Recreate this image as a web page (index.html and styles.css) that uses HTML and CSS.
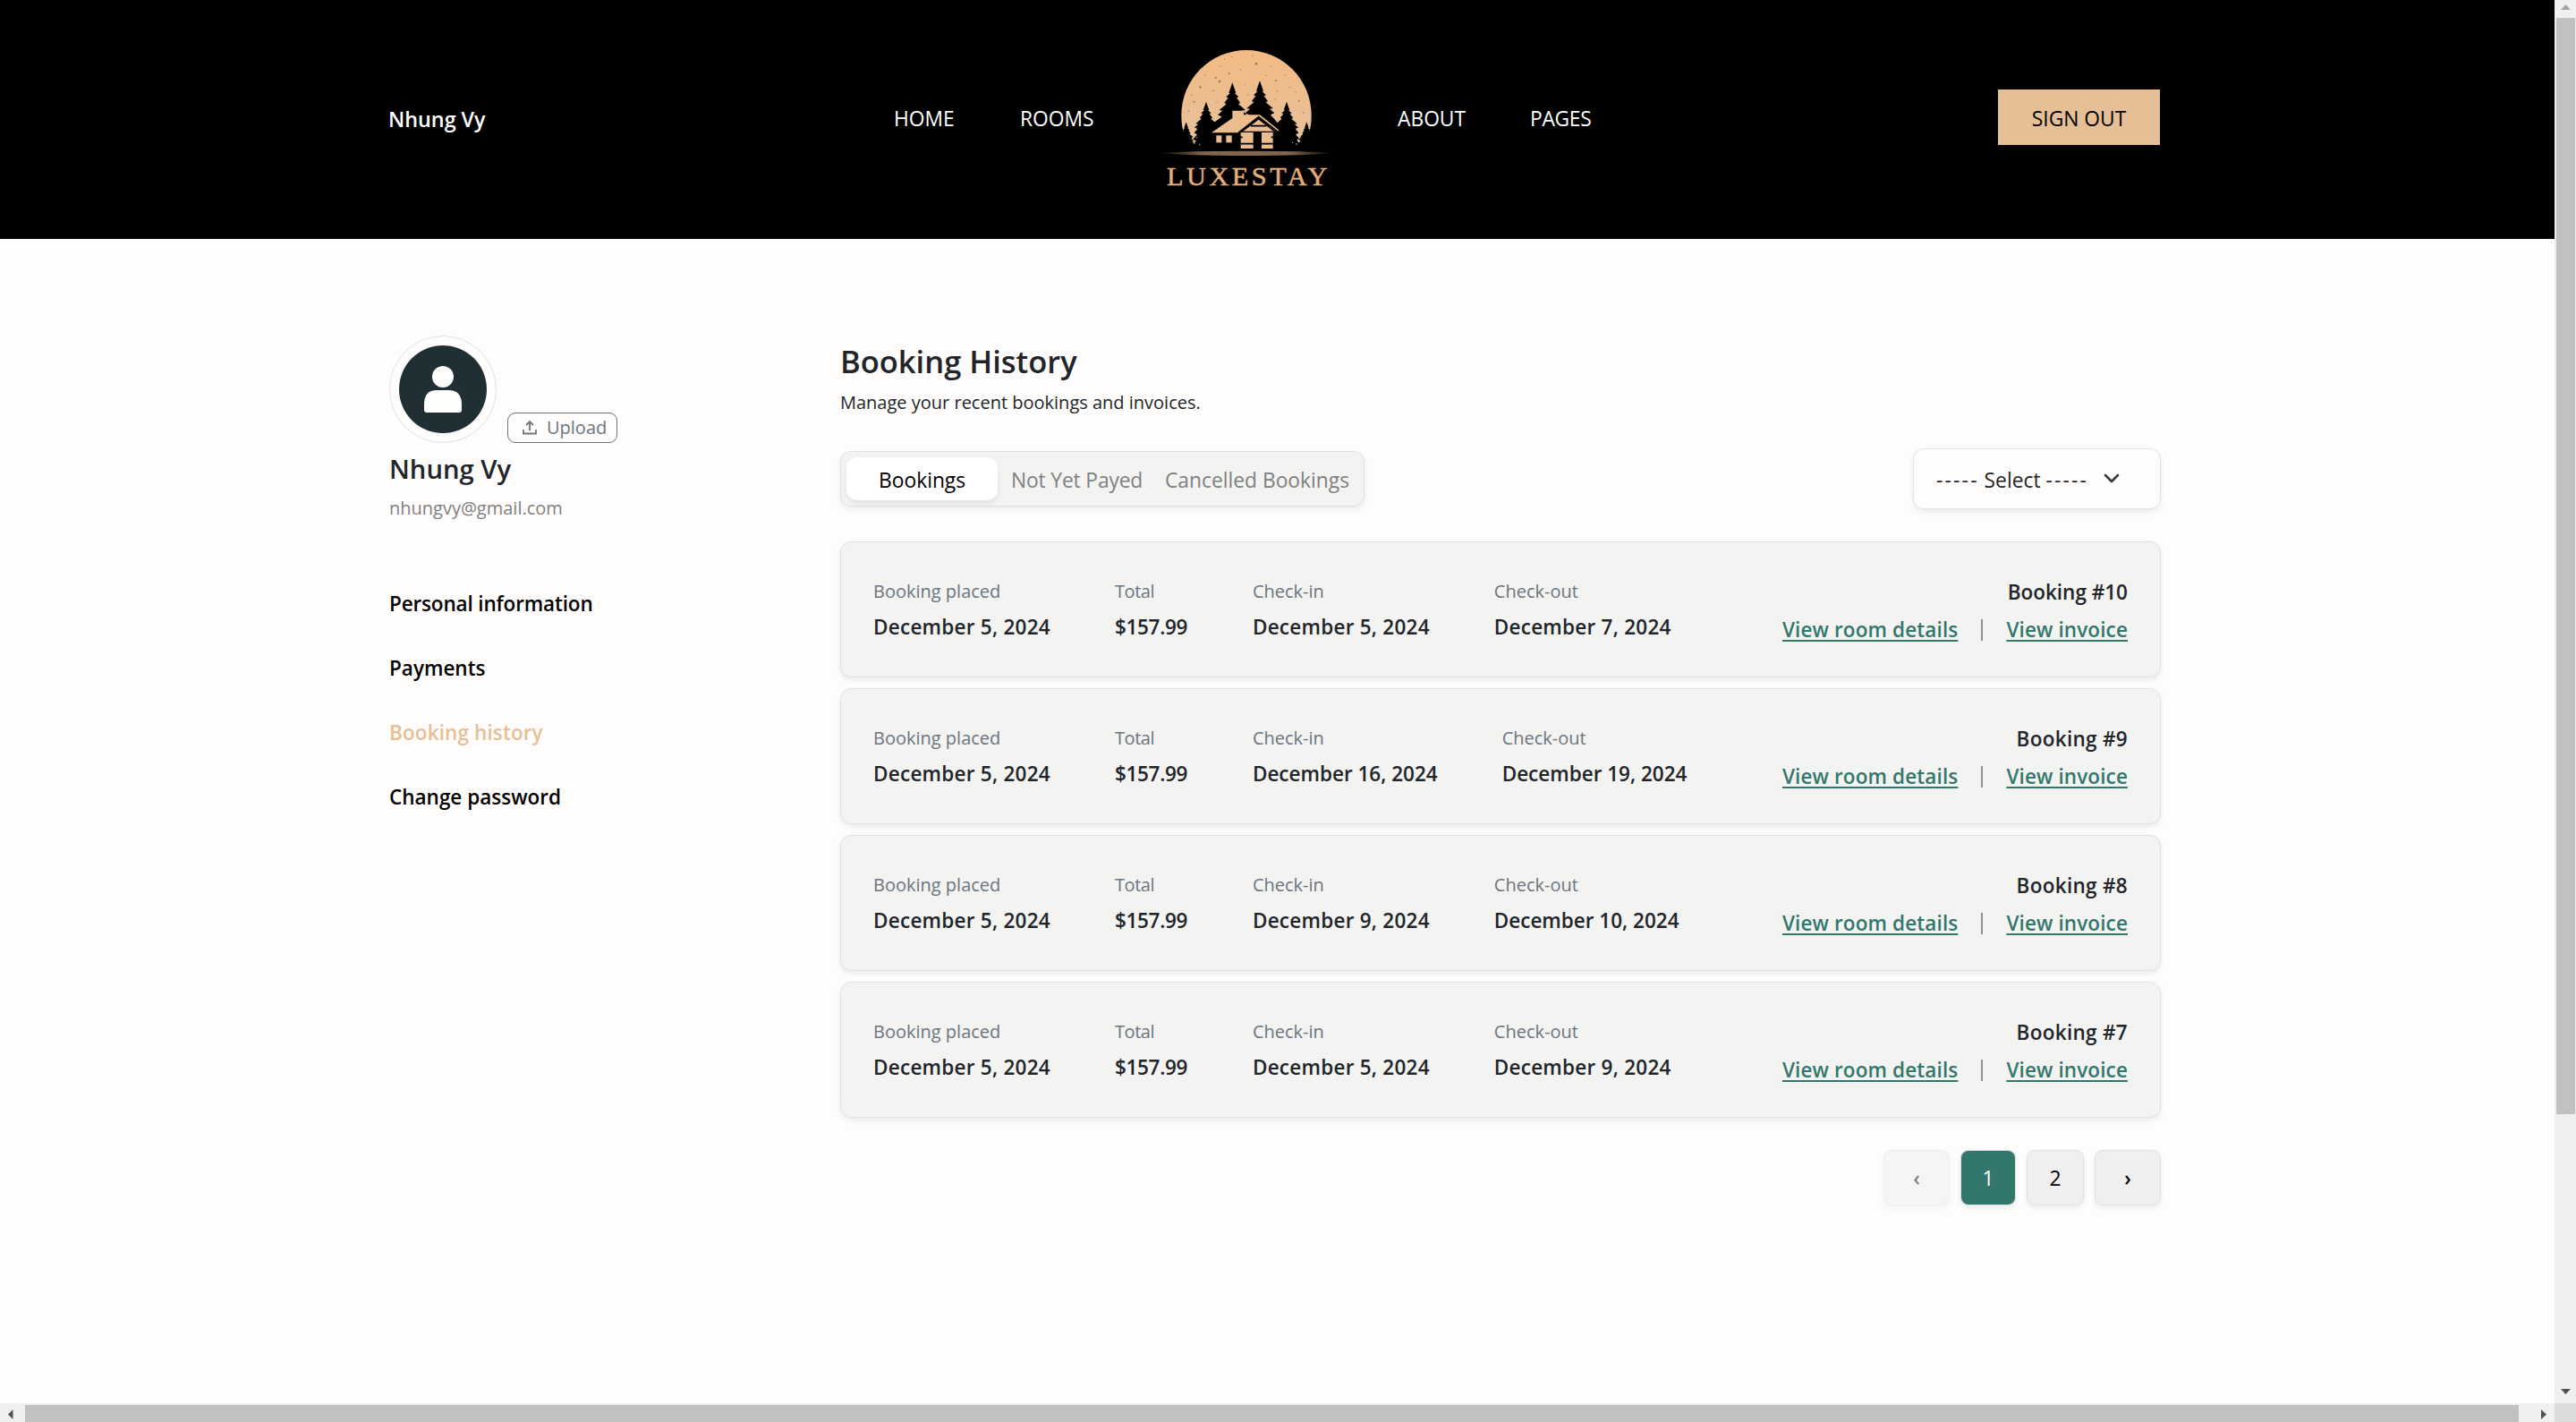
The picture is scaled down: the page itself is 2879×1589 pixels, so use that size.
FILE: index.html
```html
<!DOCTYPE html>
<html lang="en">
<head>
<meta charset="utf-8">
<title>Booking History</title>
<link rel="stylesheet" href="styles.css">
</head>
<body>
<div class="viewport">
<div class="page">
  <header class="header">
    <div class="brand-user"><span>Nhung Vy</span></div>
    <nav class="nav">
      <a class="home">HOME</a>
      <a class="rooms">ROOMS</a>
      <svg class="logo" viewBox="0 0 690 600">
        <defs>
          <linearGradient id="sun" x1="0" y1="0" x2="0" y2="1"><stop offset="0" stop-color="#f3bb84"/><stop offset="1" stop-color="#e5c19c"/></linearGradient>
          <linearGradient id="ground"><stop offset="0" stop-color="#80664f" stop-opacity="0"/><stop offset=".25" stop-color="#80664f"/><stop offset=".75" stop-color="#80664f"/><stop offset="1" stop-color="#80664f" stop-opacity="0"/></linearGradient>
          <path id="tree" d="M0 0L5 14L12 34L8 36L21 48L14 51L27 68L20 72L44 92L33 94L49 108L36 114L50 130L38 138L54 156L40 166L58 190L52 230H-52L-58 190L-40 166L-54 156L-38 138L-50 130L-36 114L-49 108L-33 94L-44 92L-20 72L-27 68L-14 51L-21 48L-8 36L-12 34L-5 14Z"/>
        </defs>
        <path d="M121 293A218 218 0 0 1 557 293Q557 325 551 345L500 405H178L127 345Q121 325 121 293Z" fill="url(#sun)"/>
        <g fill="#4a392b" opacity=".55">
          <circle cx="372" cy="121" r="4"/><circle cx="281" cy="154" r="3"/><circle cx="236" cy="168" r="3"/><circle cx="249" cy="180" r="4"/><circle cx="184" cy="199" r="3.5"/><circle cx="438" cy="177" r="3"/><circle cx="360" cy="95" r="2"/><circle cx="290" cy="97" r="2"/><circle cx="164" cy="248" r="3"/><circle cx="228" cy="211" r="2.5"/><circle cx="145" cy="279" r="2.5"/><circle cx="505" cy="215" r="2"/><circle cx="442" cy="213" r="2"/><circle cx="252" cy="130" r="2"/><circle cx="320" cy="140" r="2"/><circle cx="420" cy="130" r="2"/><circle cx="467" cy="160" r="2"/><circle cx="484" cy="200" r="2"/><circle cx="515" cy="245" r="2.5"/><circle cx="530" cy="285" r="2"/><circle cx="200" cy="160" r="2"/><circle cx="335" cy="190" r="2"/><circle cx="155" cy="225" r="2"/><circle cx="240" cy="250" r="2"/><circle cx="405" cy="160" r="2"/><circle cx="265" cy="105" r="2"/><circle cx="345" cy="225" r="2"/><circle cx="435" cy="240" r="2"/>
        </g>
        <g fill="#000">
          <use href="#tree" x="292" y="184"/><use href="#tree" x="384" y="178"/>
          <use href="#tree" transform="translate(204 248) scale(.8)"/><use href="#tree" transform="translate(474 248) scale(.8)"/>
          <use href="#tree" transform="translate(137 316) scale(.55)"/><use href="#tree" transform="translate(541 316) scale(.55)"/>
          <path d="M215 330L250 303H430L470 350V410H150L160 385L172 380L180 360ZM455 340L500 370L515 385L530 410H455Z"/>
        </g>
        <g fill="#e0bd98"><circle cx="158" cy="372" r="3"/><circle cx="164" cy="386" r="3"/><circle cx="154" cy="358" r="2.5"/><circle cx="172" cy="368" r="2"/><circle cx="512" cy="376" r="3"/><circle cx="520" cy="362" r="3"/><circle cx="507" cy="390" r="2.5"/><circle cx="182" cy="392" r="2"/><circle cx="494" cy="385" r="2"/></g>
        <g fill="#ebbd8e">
          <path d="M222 352L292 303V278H330V292H384L446 341L448 349L436 345L380 301L312 352Z"/>
          <path d="M328 347L380 308L430 347Z"/>
          <rect x="238" y="361" width="18" height="24"/><rect x="271" y="361" width="19" height="24"/>
          <rect x="320" y="351" width="42" height="54"/><rect x="390" y="351" width="38" height="54"/>
        </g>
        <path d="M312 352L380 299L446 350M354 329H406M320 389H428M318 367H326M422 367H430" fill="none" stroke="#000" stroke-width="5"/>
        <path d="M45 420Q130 413 338 413Q546 413 632 420Q540 429 338 429Q140 429 45 420Z" fill="url(#ground)"/>
        <text x="72" y="527" textLength="538" lengthAdjust="spacing" class="logo-text">LUXESTAY</text>
      </svg>
      <a class="about">ABOUT</a>
      <a class="pages">PAGES</a>
    </nav>
    <button class="signout"><span>SIGN OUT</span></button>
  </header>

  <main class="main">
    <aside class="side">
      <div class="avatar-row">
        <div class="avatar">
          <svg viewBox="0 0 98 98"><circle cx="49" cy="49" r="49" fill="#1f2f33"/><circle cx="49" cy="35" r="12" fill="#fff"/><path d="M28 72V66Q28 50 42 50H56Q70 50 70 66V72Q70 75 67 75H31Q28 75 28 72Z" fill="#fff"/></svg>
        </div>
        <button class="upload">
          <svg viewBox="0 0 16 16"><path d="M8 11V1.5M4 5L8 1L12 5M1 10V14.5H15V10" fill="none" stroke="#6c757d" stroke-width="1.8"/></svg>
          <span>Upload</span>
        </button>
      </div>
      <div class="name"><span>Nhung Vy</span></div>
      <div class="email"><span>nhungvy@gmail.com</span></div>
      <nav class="menu">
        <a class="personal">Personal information</a>
        <a>Payments</a>
        <a class="current">Booking history</a>
        <a>Change password</a>
      </nav>
    </aside>

    <section class="content">
      <h1>Booking History</h1>
      <p class="sub">Manage your recent bookings and invoices.</p>
      <div class="toolbar">
        <div class="tabs">
          <a class="tab active">Bookings</a>
          <a class="tab t2">Not Yet Payed</a>
          <a class="tab">Cancelled Bookings</a>
        </div>
        <div class="select">
          <span><span class="dash">-----</span> Select <span class="dash">-----</span></span>
          <svg viewBox="0 0 18 12"><path d="M2 2L9 9L16 2" fill="none" stroke="#343a40" stroke-width="2.6" stroke-linecap="round" stroke-linejoin="round"/></svg>
        </div>
      </div>
      <div class="cards">
        <article class="card">
          <dl><dt>Booking placed</dt><dd>December 5, 2024</dd></dl>
          <dl class="total"><dt>Total</dt><dd>$157.99</dd></dl>
          <dl><dt>Check-in</dt><dd>December 5, 2024</dd></dl>
          <dl><dt>Check-out</dt><dd>December 7, 2024</dd></dl>
          <div class="actions"><b>Booking #10</b><div class="links"><a>View room details</a><i></i><a>View invoice</a></div></div>
        </article>
        <article class="card">
          <dl><dt>Booking placed</dt><dd>December 5, 2024</dd></dl>
          <dl class="total"><dt>Total</dt><dd>$157.99</dd></dl>
          <dl class="long"><dt>Check-in</dt><dd>December 16, 2024</dd></dl>
          <dl class="long"><dt>Check-out</dt><dd>December 19, 2024</dd></dl>
          <div class="actions short"><b>Booking #9</b><div class="links"><a>View room details</a><i></i><a>View invoice</a></div></div>
        </article>
        <article class="card">
          <dl><dt>Booking placed</dt><dd>December 5, 2024</dd></dl>
          <dl class="total"><dt>Total</dt><dd>$157.99</dd></dl>
          <dl><dt>Check-in</dt><dd>December 9, 2024</dd></dl>
          <dl class="long"><dt>Check-out</dt><dd>December 10, 2024</dd></dl>
          <div class="actions short"><b>Booking #8</b><div class="links"><a>View room details</a><i></i><a>View invoice</a></div></div>
        </article>
        <article class="card">
          <dl><dt>Booking placed</dt><dd>December 5, 2024</dd></dl>
          <dl class="total"><dt>Total</dt><dd>$157.99</dd></dl>
          <dl><dt>Check-in</dt><dd>December 5, 2024</dd></dl>
          <dl><dt>Check-out</dt><dd>December 9, 2024</dd></dl>
          <div class="actions short"><b>Booking #7</b><div class="links"><a>View room details</a><i></i><a>View invoice</a></div></div>
        </article>
      </div>
      <div class="pager">
        <button class="pg arrow" disabled>‹</button>
        <button class="pg on">1</button>
        <button class="pg num">2</button>
        <button class="pg arrow">›</button>
      </div>
    </section>
  </main>
</div>
<div class="vbar"><svg viewBox="0 0 24 20"><path d="M7 11L12.5 5L18 11Z" fill="#a3a3a3"/></svg><div class="vthumb"></div><svg class="down" viewBox="0 0 24 20"><path d="M7 4L12.5 10L18 4Z" fill="#505050"/></svg></div>
<div class="hbar"><svg viewBox="0 0 28 21"><path d="M14.500 7L9 12.500L14.500 18Z" fill="#505050"/></svg><div class="hthumb"></div><svg class="right" viewBox="0 0 40 21"><path d="M25 7L31 12.500L25 18Z" fill="#505050"/></svg></div>
<div class="corner"></div>
</div>
</body>
</html>
```
FILE: styles.css
```css
* { box-sizing: border-box; margin: 0; padding: 0; }
html, body { width: 2879px; height: 1589px; overflow: hidden; }
body { font-family: "Open Sans", "Noto Sans", sans-serif; font-size: 22.8px; line-height: 36px; color: #212529; background: #fffdfc; }
button { font: inherit; border: 0; }
.viewport { display: grid; grid-template-columns: 2855px 24px; grid-template-rows: 1568px 21px; height: 1589px; }
.page { overflow: hidden; }

.header { display: flex; align-items: center; height: 267px; padding: 0 441px 5px 434px; background: #000; color: #fff; }
.brand-user { width: 565px; font-size: 23.300px; font-weight: 600; padding-top: 4px; }
.nav { display: flex; align-items: center; }
.nav a { padding-top: 4px; white-space: nowrap; }
.home { width: 141px; }
.rooms { width: 140px; }
.about { width: 148px; margin-left: 52px; }
.pages { letter-spacing: -.3px; }
.logo { display: block; width: 230px; height: 200px; }
.logo-text { font-family: "Liberation Serif", serif; font-size: 91px; fill: #e3ae7b; stroke: #e3ae7b; stroke-width: 1.5px; }
.signout { width: 181px; height: 62px; margin-left: auto; padding-top: 3px; background: #e6bf96; color: #000; }

.main { display: flex; padding: 108px 440px 0 435px; }
.side { width: 504px; }
.avatar-row { display: flex; align-items: flex-end; gap: 12px; }
.avatar { width: 120px; height: 120px; padding: 10px; border: 1px solid #dee2e6; border-radius: 50%; }
.avatar svg { display: block; width: 98px; height: 98px; }
.upload { display: flex; align-items: center; gap: 11px; width: 123px; height: 34px; padding-left: 16px; border: 1px solid #6c757d; border-radius: 9px; background: transparent; color: #6c757d; font-size: 20px; }
.upload svg { width: 16px; height: 16px; }
.name { margin-top: 11px; font-size: 29.200px; font-weight: 600; line-height: 36px; }
.email { margin-top: 8px; font-size: 20px; color: #808080; }
.menu { display: flex; flex-direction: column; gap: 36px; margin-top: 71px; font-size: 22.500px; font-weight: 600; color: #000; }
.menu .current { color: #e6bf96; letter-spacing: .12px; }
.personal { letter-spacing: -.15px; }

.content { width: 1476px; }
h1 { margin-top: 7px; font-size: 34.500px; line-height: 44px; font-weight: 600; }
.sub { margin-top: 6px; font-size: 20px; line-height: 36px; }
.toolbar { display: flex; justify-content: space-between; align-items: center; height: 68px; margin-top: 33px; }
.tabs { display: flex; align-items: center; width: 586px; height: 62px; padding: 6px; border: 1px solid #dee2e6; border-radius: 12px; background: #f3f3f2; box-shadow: 0 3px 6px rgba(0,0,0,.075); color: #808080; }
.tab { height: 48px; line-height: 51px; white-space: nowrap; }
.active { width: 169px; padding-left: 36px; border-radius: 12px; background: #fff; color: #000; box-shadow: 0 3px 6px rgba(0,0,0,.075); }
.t2 { width: 187px; padding-left: 15px; letter-spacing: -.15px; }
.select { display: flex; align-items: center; gap: 17px; width: 277px; height: 68px; padding-left: 25px; border: 1px solid #dee2e6; border-radius: 12px; box-shadow: 0 3px 6px rgba(0,0,0,.075); }
.select > span { padding-top: 3px; }
.select svg { width: 18px; height: 12px; }
.dash { letter-spacing: 2.2px; }

.cards { display: grid; gap: 12px; margin-top: 36px; }
.card { display: flex; gap: 72px; height: 152px; padding: 37px 36px 0; border: 1px solid #dee2e6; border-radius: 12px; background: #f3f3f2; box-shadow: 0 3px 6px rgba(0,0,0,.075); white-space: nowrap; }
dt { font-size: 20px; line-height: 36px; color: #6c757d; }
dd { margin-top: 4px; font-size: 22.500px; line-height: 36px; font-weight: 600; letter-spacing: .25px; }
.long dd { letter-spacing: 0; }
.total { width: 82px; }
.total dt { letter-spacing: -.4px; }
.total dd { letter-spacing: -.3px; }
.actions { margin-left: auto; text-align: right; font-size: 22.500px; }
.actions b { display: block; font-weight: 600; margin-top: 1px; }
.short b { letter-spacing: .3px; }
.links { display: flex; align-items: center; margin-top: 6px; letter-spacing: .12px; }
.links a { color: #33776c; font-weight: 600; text-decoration: underline; text-decoration-thickness: 2px; text-underline-offset: 3px; }
.links i { width: 2px; height: 24px; margin: 0 26px; background: #8a9299; }

.pager { display: flex; justify-content: flex-end; gap: 12px; margin-top: 36px; }
.pg { width: 62px; height: 62px; padding-top: 2px; border: 1px solid #dee2e6; border-radius: 9px; background: #efefef; color: #000; box-shadow: 0 3px 6px rgba(0,0,0,.075); }
.num { width: 64px; }
.on { background: #33776c; color: #fff; }
.arrow { width: 74px; font-weight: 600; }
.arrow:disabled { opacity: .5; }

.vbar { grid-column: 2; grid-row: 1; display: flex; flex-direction: column; align-items: center; background: #f0f0f0; }
.vbar svg { width: 24px; height: 20px; }
.vbar .down { margin-top: auto; }
.vthumb { width: 21px; height: 1225px; background: #c1c1c1; }
.hbar { display: flex; align-items: center; background: #f0f0f0; }
.hbar svg { width: 28px; height: 21px; }
.hthumb { width: 2787px; height: 19px; margin-top: 2px; background: #c1c1c1; }
.hbar .right { width: 40px; }
.corner { background: #dcdcdc; }
```
